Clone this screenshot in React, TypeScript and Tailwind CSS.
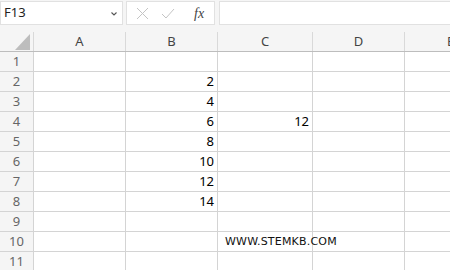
import React from 'react';

const COLS = ['A', 'B', 'C', 'D', 'E'];
const WIDTHS = ['w-[92px]', 'w-[92px]', 'w-[95px]', 'w-[92px]', 'w-[92px]'];

// valores de la hoja: [fila, columna] -> texto
const CELLS: Record<string, string> = {
  '2-B': '2',
  '3-B': '4',
  '4-B': '6',
  '4-C': '12',
  '5-B': '8',
  '6-B': '10',
  '7-B': '12',
  '8-B': '14',
};

const FormulaBar = () => (
  <div className="h-[32px] bg-[#f5f5f5] flex items-start pt-[1px] gap-[3px]">
    <div className="w-[123px] h-[24px] bg-white border border-[#e1e1e1] flex items-center justify-between pl-[3px] pr-[4px]">
      <span className="text-[13px] text-[#222]">F13</span>
      <svg width="8" height="6" viewBox="0 0 8 6" className="mt-[1px]">
        <path d="M1.5 1.5 L4 4 L6.5 1.5" fill="none" stroke="#555" strokeWidth="1.1" />
      </svg>
    </div>
    <div className="w-[89px] h-[24px] bg-white border border-[#e1e1e1] flex items-center pl-[9px] gap-[12px]">
      <svg width="13" height="13" viewBox="0 0 13 13">
        <path d="M1 1 L12 12 M12 1 L1 12" stroke="#c4c4c4" strokeWidth="1" />
      </svg>
      <svg width="14" height="11" viewBox="0 0 14 11">
        <path d="M1 6 L5 10 L13 1" fill="none" stroke="#c4c4c4" strokeWidth="1" />
      </svg>
      <span className="ml-[7px] text-[14px] italic text-[#444]" style={{ fontFamily: '"Liberation Serif", serif' }}>
        fx
      </span>
    </div>
    <div className="flex-1 ml-[1px] h-[24px] bg-white border border-[#e1e1e1] border-r-0" />
  </div>
);

export default function App() {
  return (
    <div
      className="w-[450px] h-[270px] overflow-hidden bg-white"
      style={{ fontFamily: '"Noto Sans", "Open Sans", sans-serif' }}
    >
      <FormulaBar />

      {/* cabecera de columnas */}
      <div className="flex w-max h-[20px] bg-[#f5f5f5] border-b border-[#bdbdbd]">
        <div className="w-[34px] shrink-0 h-full border-r border-[#d9d9d9] flex items-end justify-end pr-[2px] pb-[1px]">
          <svg width="16" height="16" viewBox="0 0 16 16">
            <path d="M15 0 L15 16 L0 16 Z" fill="#bdbdbd" />
          </svg>
        </div>
        {COLS.map((c, i) => (
          <div
            key={c}
            className={`${WIDTHS[i]} shrink-0 h-full border-r border-[#d9d9d9] flex items-center justify-center text-[13px] text-[#444]`}
          >
            {c}
          </div>
        ))}
      </div>

      {/* filas */}
      {Array.from({ length: 11 }).map((_, r) => {
        const row = r + 1;
        return (
          <div key={row} className="flex w-max h-[20px]">
            <div className="w-[34px] shrink-0 h-full bg-[#f5f5f5] border-r border-b border-[#d4d4d4] flex items-center justify-center text-[13px] text-[#666]">
              {row}
            </div>
            {COLS.map((c, i) => {
              const v = CELLS[`${row}-${c}`];
              const isUrl = row === 10 && c === 'C';
              return (
                <div
                  key={c}
                  className={`${WIDTHS[i]} shrink-0 h-full border-r border-b border-[#d4d4d4] flex items-center justify-end pr-[3px] text-[13px] text-black relative`}
                >
                  {v}
                  {isUrl && (
                    <span
                      className="absolute left-[7px] top-[2px] whitespace-nowrap text-[11px] text-[#111] tracking-[0.2px]"
                      style={{ fontFamily: '"DejaVu Sans", Verdana, sans-serif' }}
                    >
                      WWW.STEMKB.COM
                    </span>
                  )}
                </div>
              );
            })}
          </div>
        );
      })}
    </div>
  );
}
